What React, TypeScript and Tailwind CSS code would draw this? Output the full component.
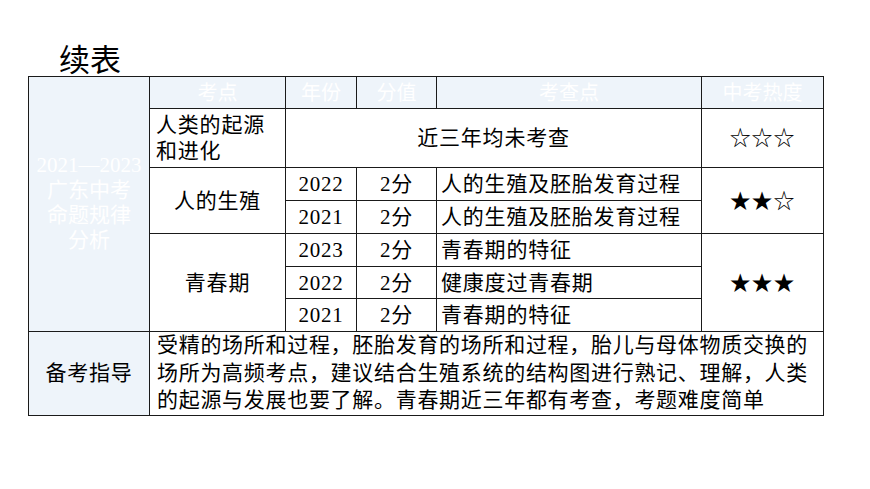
const font = {
  fontFamily: '"Liberation Serif", "Noto Sans CJK SC", serif',
};

const cell =
  "border border-[#1a1a1a] text-[21px] leading-[26px] tracking-[0.8px] text-black p-0";
const headCell =
  "border border-[#1a1a1a] bg-[#eef4fa] text-white text-[20px] leading-[24px] text-center font-normal p-0";

export default function App() {
  return (
    <div className="w-[870px] h-[489px] bg-white overflow-hidden" style={font}>
      <div
        className="h-[76px] pl-[59px] pt-[40px] text-[31px] leading-[36px] text-black"
        style={{ fontFamily: '"Noto Sans CJK SC", sans-serif' }}
      >
        续表
      </div>
      <table className="ml-[28px] border-collapse table-fixed w-[795px]">
        <colgroup>
          <col className="w-[121px]" />
          <col className="w-[136px]" />
          <col className="w-[71px]" />
          <col className="w-[80px]" />
          <col className="w-[265px]" />
          <col className="w-[122px]" />
        </colgroup>
        <tbody>
          <tr className="h-[32px]">
            <td
              rowSpan={7}
              className="border border-[#1a1a1a] bg-[#eef4fa] text-white text-[21px] leading-[25px] text-center align-middle p-0"
            >
              <div className="pb-[2px]">
                2021—2023
                <br />
                广东中考
                <br />
                命题规律
                <br />
                分析
              </div>
            </td>
            <th className={headCell}>考点</th>
            <th className={headCell}>年份</th>
            <th className={headCell}>分值</th>
            <th className={headCell}>考查点</th>
            <th className={headCell}>中考热度</th>
          </tr>
          <tr className="h-[59px]">
            <td className={`${cell} pl-[6px] align-middle`}>
              人类的起源
              <br />
              和进化
            </td>
            <td colSpan={3} className={`${cell} text-center`}>
              近三年均未考查
            </td>
            <td className={`${cell} text-center`}>☆☆☆</td>
          </tr>
          <tr className="h-[33px]">
            <td rowSpan={2} className={`${cell} text-center`}>
              人的生殖
            </td>
            <td className={`${cell} text-center`}>2022</td>
            <td className={`${cell} text-center`}>2分</td>
            <td className={`${cell} pl-[4px]`}>人的生殖及胚胎发育过程</td>
            <td rowSpan={2} className={`${cell} text-center`}>
              ★★☆
            </td>
          </tr>
          <tr className="h-[33px]">
            <td className={`${cell} text-center`}>2021</td>
            <td className={`${cell} text-center`}>2分</td>
            <td className={`${cell} pl-[4px]`}>人的生殖及胚胎发育过程</td>
          </tr>
          <tr className="h-[33px]">
            <td rowSpan={3} className={`${cell} text-center`}>
              青春期
            </td>
            <td className={`${cell} text-center`}>2023</td>
            <td className={`${cell} text-center`}>2分</td>
            <td className={`${cell} pl-[4px]`}>青春期的特征</td>
            <td rowSpan={3} className={`${cell} text-center`}>
              ★★★
            </td>
          </tr>
          <tr className="h-[32px]">
            <td className={`${cell} text-center`}>2022</td>
            <td className={`${cell} text-center`}>2分</td>
            <td className={`${cell} pl-[4px]`}>健康度过青春期</td>
          </tr>
          <tr className="h-[33px]">
            <td className={`${cell} text-center`}>2021</td>
            <td className={`${cell} text-center`}>2分</td>
            <td className={`${cell} pl-[4px]`}>青春期的特征</td>
          </tr>
          <tr className="h-[83px]">
            <td className={`${cell} bg-[#eef4fa] text-center`}>备考指导</td>
            <td
              colSpan={5}
              className="border border-[#1a1a1a] text-[21px] leading-[27.5px] tracking-[0.7px] text-black p-0 pl-[7px] whitespace-nowrap"
            >
              受精的场所和过程，胚胎发育的场所和过程，胎儿与母体物质交换的
              <br />
              场所为高频考点，建议结合生殖系统的结构图进行熟记、理解，人类
              <br />
              的起源与发展也要了解。青春期近三年都有考查，考题难度简单
            </td>
          </tr>
        </tbody>
      </table>
    </div>
  );
}
